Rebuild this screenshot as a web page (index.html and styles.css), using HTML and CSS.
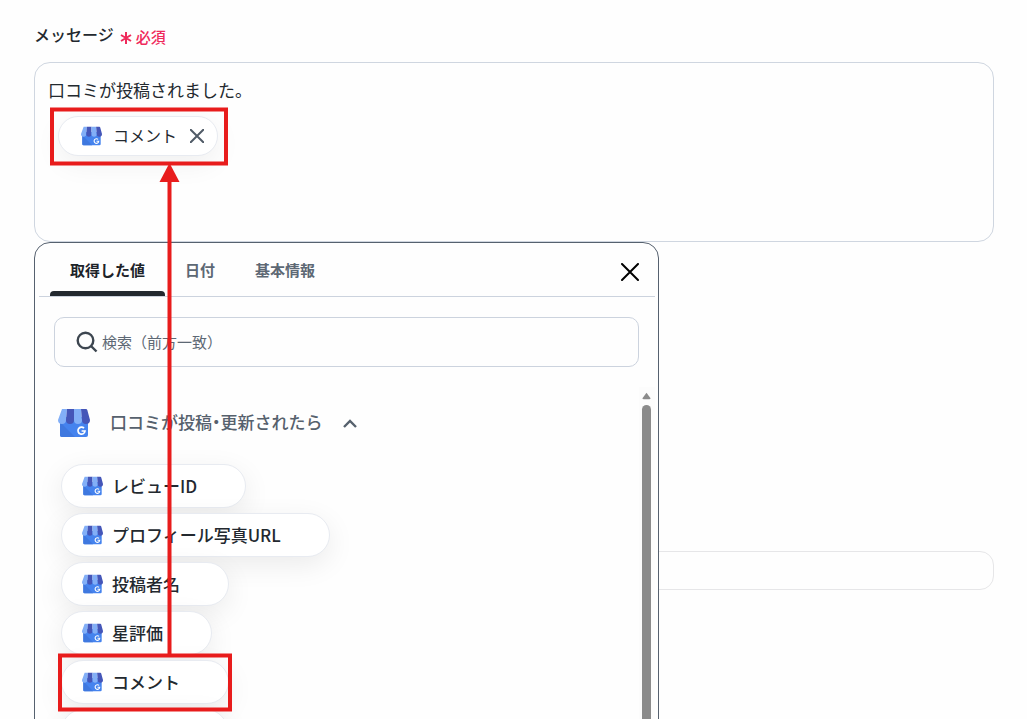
FILE: index.html
```html
<!DOCTYPE html>
<html lang="ja">
<head>
<meta charset="utf-8">
<meta name="viewport" content="width=device-width, initial-scale=1">
<title>メッセージ</title>
<link rel="stylesheet" href="styles.css">
</head>
<body>
<svg class="defs" aria-hidden="true">
  <symbol id="shop" viewBox="0 0 32 30">
    <rect x="2" y="9" width="28" height="20" rx="2" fill="#4583ee"/>
    <path d="M2 14L17 29H4Q2 29 2 27Z" fill="#3f78df"/>
    <path d="M4 1H9L8 12A4 4 0 0 1 0 12Z" fill="#82aff7"/>
    <path d="M9 1H16V12A4 4 0 0 1 8 12Z" fill="#4556b8"/>
    <path d="M16 1H23L24 12A4 4 0 0 1 16 12Z" fill="#82aff7"/>
    <path d="M23 1H28Q29 1 29.300 2L32 12A4 4 0 0 1 24 12Z" fill="#4556b8"/>
    <path d="M26 20.200A3.500 3.500 0 1 0 27 23H23.600" fill="none" stroke="#fff" stroke-width="1.700"/>
  </symbol>
</svg>
<main class="page">
  <div class="label-row">
    <span class="label" id="message-label">メッセージ</span>
    <svg class="star" viewBox="0 0 12 12" aria-hidden="true"><path d="M6 0V12M1 3L11 9M11 3L1 9"/></svg>
    <span class="required">必須</span>
  </div>
  <div class="message-wrap">
    <div class="message" role="textbox" aria-multiline="true" aria-labelledby="message-label" contenteditable="true" spellcheck="false">
      <p class="message-text">口コミが投稿されました。</p>
      <div class="tag" contenteditable="false">
        <svg class="shop-small"><use href="#shop"/></svg>
        <span class="tag-text">コメント</span>
        <button class="tag-remove" type="button" aria-label="削除"><svg viewBox="0 0 14 14"><path d="M0 0L14 14M14 0L0 14"/></svg></button>
      </div>
    </div>
    <section class="panel">
      <div class="tabs">
        <div class="tab-list" role="tablist">
          <button class="tab tab-active" type="button" role="tab" aria-selected="true">取得した値</button>
          <button class="tab" type="button" role="tab">日付</button>
          <button class="tab" type="button" role="tab">基本情報</button>
        </div>
        <button class="close" type="button" aria-label="閉じる"><svg viewBox="0 0 18 18"><path d="M1 1L17 17M17 1L1 17"/></svg></button>
      </div>
      <div class="search">
        <svg viewBox="0 0 22 22" aria-hidden="true"><circle cx="9.500" cy="9.500" r="7.800"/><path d="M15 15L20.500 20.500"/></svg>
        <input class="search-input" type="text" placeholder="検索（前方一致）" aria-label="検索（前方一致）">
      </div>
      <div class="results">
        <div class="results-body">
          <button class="group" type="button" aria-expanded="true">
            <svg class="shop-large"><use href="#shop"/></svg>
            <span class="group-title">口コミが投稿<span class="narrow">・</span>更新されたら</span>
            <svg class="chevron" viewBox="0 0 14 10"><path d="M1 8L7 2L13 8"/></svg>
          </button>
          <div class="chips">
            <button class="chip" type="button"><svg class="shop-small"><use href="#shop"/></svg><span class="chip-text">レビューID</span></button>
            <button class="chip" type="button"><svg class="shop-small"><use href="#shop"/></svg><span class="chip-text">プロフィール写真URL</span></button>
            <button class="chip" type="button"><svg class="shop-small"><use href="#shop"/></svg><span class="chip-text">投稿者名</span></button>
            <button class="chip" type="button"><svg class="shop-small"><use href="#shop"/></svg><span class="chip-text">星評価</span></button>
            <button class="chip" type="button"><svg class="shop-small"><use href="#shop"/></svg><span class="chip-text">コメント</span></button>
            <div class="chip chip-rest"></div>
          </div>
        </div>
        <div class="scrollbar" aria-hidden="true">
          <svg viewBox="0 0 10 8"><path d="M5 0.500L9.500 6.500Q9.500 7.500 8 7.500H2Q0.500 7.500 0.500 6.500Z"/></svg>
          <div class="thumb"></div>
        </div>
      </div>
    </section>
  </div>
  <input class="next-field" type="text" aria-label="入力">
  <svg class="marks" width="240" height="719" aria-hidden="true">
    <rect x="52" y="109.500" width="174" height="54"/>
    <rect x="60" y="655.500" width="170" height="54"/>
    <path class="mark-line" d="M169.500 180V655"/>
    <path class="mark-head" d="M169.500 163L179.500 182H159.500Z"/>
  </svg>
</main>
</body>
</html>
```
FILE: styles.css
```css
* { box-sizing: border-box; }

body {
  margin: 0;
  background: #fefefe;
  color: #23292f;
  font-family: "Noto Sans CJK JP", "Noto Sans", sans-serif;
  font-size: 17px;
}

button, input { font: inherit; color: inherit; }

button {
  border: 0;
  padding: 0;
  background: none;
  cursor: pointer;
}

svg { display: block; flex: none; }

.defs { position: absolute; width: 0; height: 0; }

.page {
  position: relative;
  min-height: 100vh;
  padding: 20px 33px 0 34px;
  overflow: hidden;
}

.label-row {
  display: flex;
  align-items: center;
  height: 28px;
  margin-bottom: 14px;
}

.label { font-size: 16px; font-weight: 500; }

.star {
  width: 12px;
  height: 12px;
  margin: 8px 4px 0 6px;
  fill: none;
  stroke: #ef2a5b;
  stroke-width: 2;
}

.required {
  padding-top: 4px;
  color: #ef2a5b;
  font-size: 15px;
  font-weight: 500;
}

.message-wrap { position: relative; }

.message {
  min-height: 180px;
  padding: 13px;
  border: 1px solid #cfd6e0;
  border-radius: 16px;
  outline: 0;
}

.message-text {
  margin: 0 0 12px;
  line-height: 28px;
}

.tag {
  display: inline-flex;
  align-items: center;
  height: 40px;
  margin-left: 10px;
  padding: 0 13px 0 22px;
  border: 1px solid #e8ebf1;
  border-radius: 20px;
  background: #fff;
  box-shadow: 0 8px 28px rgba(0, 0, 0, 0.06);
}

.shop-small { width: 21px; height: 20px; margin-bottom: 1px; }

.tag-text {
  margin: 0 13px 0 11px;
  padding-bottom: 2px;
  font-size: 16px;
}

.tag-remove svg {
  width: 14px;
  height: 14px;
  fill: none;
  stroke: #505b67;
  stroke-width: 2;
}

.panel {
  position: absolute;
  z-index: 1;
  top: 180px;
  left: 0;
  width: 625px;
  max-width: 100%;
  padding: 0 3px 0 4px;
  border: 1px solid #56616f;
  border-radius: 16px;
  background: #fefefe;
}

.tabs {
  display: flex;
  justify-content: space-between;
  height: 54px;
  padding: 0 16px 0 11px;
  border-bottom: 1px solid #ccd3de;
}

.tab-list { display: flex; }

.tab {
  padding: 0 20px;
  color: #5d6874;
  font-size: 15px;
  font-weight: 700;
}

.tab-active {
  position: relative;
  color: #1d2329;
}

.tab-active::after {
  content: "";
  position: absolute;
  right: 0;
  bottom: 0;
  left: 0;
  height: 5px;
  border-radius: 4px 4px 0 0;
  background: #23292f;
}

.close { padding-top: 5px; }

.close svg {
  width: 18px;
  height: 18px;
  fill: none;
  stroke: #000;
  stroke-width: 2;
  stroke-linecap: round;
}

.search {
  display: flex;
  align-items: center;
  gap: 4px;
  height: 50px;
  margin: 20px 16px 20px 15px;
  padding: 0 21px;
  border: 1px solid #ccd3de;
  border-radius: 10px;
}

.search svg {
  width: 22px;
  height: 22px;
  fill: none;
  stroke: #3d4650;
  stroke-width: 2.400;
}

.search-input {
  flex: 1;
  min-width: 0;
  padding: 0 0 2px;
  border: 0;
  outline: 0;
  background: none;
  font-size: 15px;
}

.search-input::placeholder { color: #5d6874; opacity: 1; }

.results {
  display: flex;
  height: 400px;
  overflow: hidden;
}

.results-body {
  flex: 1;
  padding: 17px 0 0 19px;
}

.group {
  display: flex;
  align-items: center;
  height: 38px;
  color: #56616d;
  font-weight: 500;
}

.shop-large { width: 32px; height: 30px; }

.group-title {
  margin: 0 20px;
  padding-bottom: 3px;
}

.narrow { font-feature-settings: "halt"; }

.chevron {
  width: 14px;
  height: 10px;
  margin-top: 2px;
  fill: none;
  stroke: #56616d;
  stroke-width: 2.400;
}

.chips {
  display: flex;
  flex-direction: column;
  align-items: flex-start;
  gap: 5px;
  margin: 22px 0 0 3px;
}

.chip {
  display: flex;
  align-items: center;
  gap: 9px;
  height: 44px;
  padding: 0 48px 0 20px;
  border: 1px solid #e8ebf1;
  border-radius: 22px;
  background: #fff;
  box-shadow: 0 8px 28px rgba(0, 0, 0, 0.08);
  font-weight: 500;
}

.chip-text { padding-bottom: 2px; }

.chip-rest { width: 167px; }

.scrollbar {
  width: 16px;
  padding: 5px 4px 0 3px;
  background: #fcfcfc;
}

.scrollbar svg { width: 9px; height: 8px; fill: #8b8b8b; }

.thumb {
  height: 400px;
  margin-top: 5px;
  border-radius: 5px;
  background: #8b8b8b;
}

.next-field {
  display: block;
  width: 100%;
  height: 39px;
  margin-top: 309px;
  padding: 0 16px;
  border: 1px solid #e6e6e8;
  border-radius: 14px;
  background: #fefefe;
}

.marks {
  position: absolute;
  z-index: 2;
  top: 0;
  left: 0;
  pointer-events: none;
}

.marks rect, .mark-line {
  fill: none;
  stroke: #e81c1c;
  stroke-width: 4;
}

.mark-head { fill: #e81c1c; }
```
